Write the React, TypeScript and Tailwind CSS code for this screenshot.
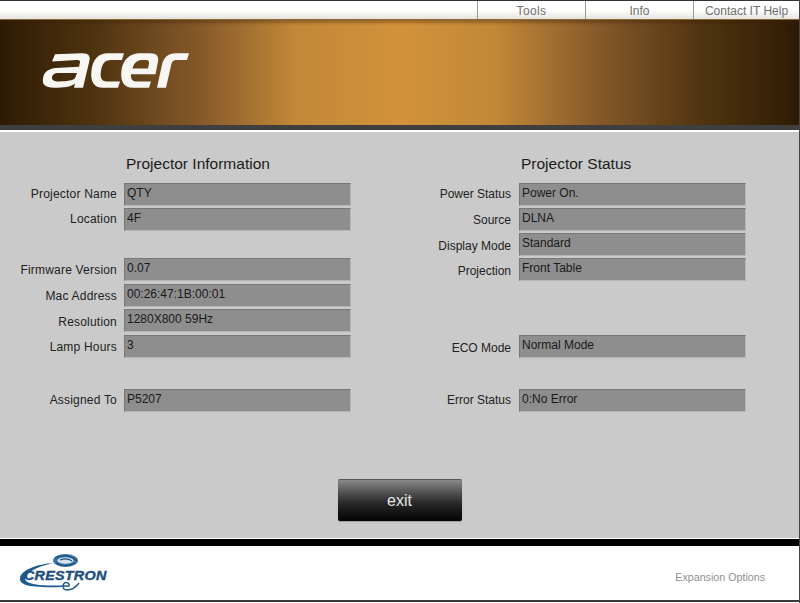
const font = "font-['Liberation_Sans',Arial,sans-serif]";

function Field({ label, value, cls, labelCls }: { label: string; value: string; cls: string; labelCls: string }) {
  return (
    <div className={`flex ${cls}`}>
      <div className={`shrink-0 text-right text-[12px] leading-[14px] text-[#222] ${labelCls}`}>{label}</div>
      <div className="h-[23px] w-[227px] border border-[#b5b5b5] border-l-[#777] border-t-[#777] bg-[#8e8e8e] pl-[2px] pt-[2px] text-[12px] leading-[14px] text-[#1a1a1a]">
        {value}
      </div>
    </div>
  );
}

const L = "w-[117px] mr-[7px] tracking-[0.2px]";
const R = "w-[116px] mr-[8px]";

function Acer() {
  return (
    <svg width="148" height="42" viewBox="0 0 148 40" preserveAspectRatio="none" className="ml-[42px] mt-[30px] block" fill="#f8f6f2" fillRule="evenodd">
      <path d="M13 4 L40 3 C47 3 49 6 47 12 L41 36 L32 36 L33 32 C28 35.500 22 36 12 36 C3 36 0 33 1 27 C2 20 8 17 18 17 L37 16 L38 12 C38.500 10 37 9.500 34 9.500 L10 11 Z M17 22 C12 22 10 24 10 26.500 C10 29 12 30 17 30 C25 30 31 29 33 27 L35 22 Z" />
      <path d="M82 3 H66 C56 3 51 9 49.500 19 C48 30 52 36 61 36 H76 L78 30 H65 C59 30 58 26 59 20 C60 13 63 9.500 69 9.500 H80 Z" />
      <path d="M98 3 H108 C115 3 117 6 116 11 L113.500 23 H89 C88.500 27 90 30 95 30 H109 L107 36 H91 C82 36 78 30 79.500 19 C81 9 88 3 98 3 Z M101 9.500 C95 9.500 92 12 90.500 17.500 H106 L107 13 C107.500 10.500 106 9.500 104 9.500 Z" />
      <path d="M115 36 L120 14 C121.500 7 126 3 134 3 H147 L145 9.500 H135 C131 9.500 130 11 129 15 L124 36 Z" />
    </svg>
  );
}

function Crestron() {
  return (
    <div className="relative ml-[19px] h-[46px] w-[92px]">
      <svg width="92" height="46" viewBox="0 0 92 46" className="absolute left-0 top-0" fill="none">
        <ellipse cx="46.500" cy="9.500" rx="12.500" ry="6.500" fill="#3a76a8" />
        <ellipse cx="46.500" cy="9.500" rx="8" ry="3.200" fill="#d4e2ee" />
        <path d="M36 7 C41 3.500 52 4 58 10 M37 12 C42 16 51 15 56 12 M41 9 C45 7.500 50 8 53 10" stroke="#1d4f80" strokeWidth="1.200" />
        <path d="M35 12 C18 13 2 19 1 27 C0 34 10 37 43 36 L43 34.500 C18 35 6 33 6 27 C6.500 21 20 15 35 12 Z" fill="#1d5a90" />
        <path d="M43 35 H50 C51 32 47 30.500 45 32.500 C43 35 44 39 48 39 C52 39 57 36 60 32" stroke="#1d5a90" strokeWidth="1.400" />
      </svg>
      <div className={`absolute left-[5px] top-[18px] origin-left scale-x-[1.15] text-[12.5px] leading-[15px] font-bold italic tracking-[0.2px] text-[#1d4f80] [-webkit-text-stroke:0.4px_#1d4f80] ${font}`}>CRESTRON</div>
    </div>
  );
}

export default function App() {
  return (
    <div className={`flex h-[603px] w-[800px] flex-col overflow-hidden border-r border-r-[#444] bg-white ${font}`}>
      <div className="h-px bg-[#333]" />
      <div className="flex h-[18px] justify-end bg-gradient-to-b from-white via-white to-[#e6e3dd]">
        {[
          ["Tools", "w-[108px] tracking-[0.4px]"],
          ["Info", "w-[108px]"],
          ["Contact IT Help", "w-[106px]"],
        ].map(([t, w]) => (
          <div key={t} className={`${w} border-l border-l-[#9a9a94] text-center text-[12px] leading-[21px] text-[#707070]`}>{t}</div>
        ))}
      </div>
      <div className="h-px bg-[#8a6a3a]" />
      <div className="h-[105px] overflow-hidden bg-[linear-gradient(to_right,#2e1b05_0%,#4f3410_12%,#85592a_25%,#c28838_37%,#d2923a_50%,#c28838_62%,#85592a_75%,#4f3410_88%,#2e1b05_100%)] shadow-[inset_0_3px_3px_rgba(60,30,0,0.35)]">
        <Acer />
      </div>
      <div className="h-[5px] bg-[#3f3f3f]" />
      <div className="h-[2px] bg-white" />
      <div className="flex h-[406px] flex-col bg-[#cacaca]">
        <div className="flex">
          <div className="w-[395px]">
            <h2 className="mt-[23px] ml-[126px] text-[15.5px] leading-[18px] font-normal text-[#1c1c1c]">Projector Information</h2>
            <Field label="Projector Name" value="QTY" cls="mt-[10px]" labelCls={`${L} pt-[4px]`} />
            <Field label="Location" value="4F" cls="mt-[2px]" labelCls={`${L} pt-[4px]`} />
            <Field label="Firmware Version" value="0.07" cls="mt-[27px]" labelCls={`${L} pt-[5px]`} />
            <Field label="Mac Address" value="00:26:47:1B:00:01" cls="mt-[3px]" labelCls={`${L} pt-[5px]`} />
            <Field label="Resolution" value="1280X800 59Hz" cls="mt-[2px]" labelCls={`${L} pt-[6px]`} />
            <Field label="Lamp Hours" value="3" cls="mt-[3px]" labelCls={`${L} pt-[5px]`} />
            <Field label="Assigned To" value="P5207" cls="mt-[31px]" labelCls={`${L} pt-[4px]`} />
          </div>
          <div className="w-[404px]">
            <h2 className="mt-[23px] ml-[126px] text-[15.5px] leading-[18px] font-normal text-[#1c1c1c]">Projector Status</h2>
            <Field label="Power Status" value="Power On." cls="mt-[10px]" labelCls={`${R} pt-[4px]`} />
            <Field label="Source" value="DLNA" cls="mt-[2px]" labelCls={`${R} pt-[5px]`} />
            <Field label="Display Mode" value="Standard" cls="mt-[2px]" labelCls={`${R} pt-[6px]`} />
            <Field label="Projection" value="Front Table" cls="mt-[2px]" labelCls={`${R} pt-[6px]`} />
            <Field label="ECO Mode" value="Normal Mode" cls="mt-[54px]" labelCls={`${R} pt-[6px]`} />
            <Field label="Error Status" value="0:No Error" cls="mt-[31px]" labelCls={`${R} pt-[4px]`} />
          </div>
        </div>
        <div className="mt-[67px] flex justify-center">
          <button className="h-[42px] w-[124px] rounded-[2px] border-t border-t-[#555] bg-gradient-to-b from-[#8a8a8a] via-[#2a2a2a] via-55% to-[#050505] text-[16px] text-[#e8e8e8] shadow-[0_1px_1px_#999]">
            exit
          </button>
        </div>
      </div>
      <div className="h-px bg-white" />
      <div className="h-[7px] bg-black" />
      <div className="flex h-[54px] items-center justify-between bg-white pt-[2px]">
        <Crestron />
        <div className="mr-[34px] mt-[7px] text-[10.7px] text-[#8f8f8f]">Expansion Options</div>
      </div>
      <div className="h-[2px] bg-[#3a3a3a]" />
    </div>
  );
}
